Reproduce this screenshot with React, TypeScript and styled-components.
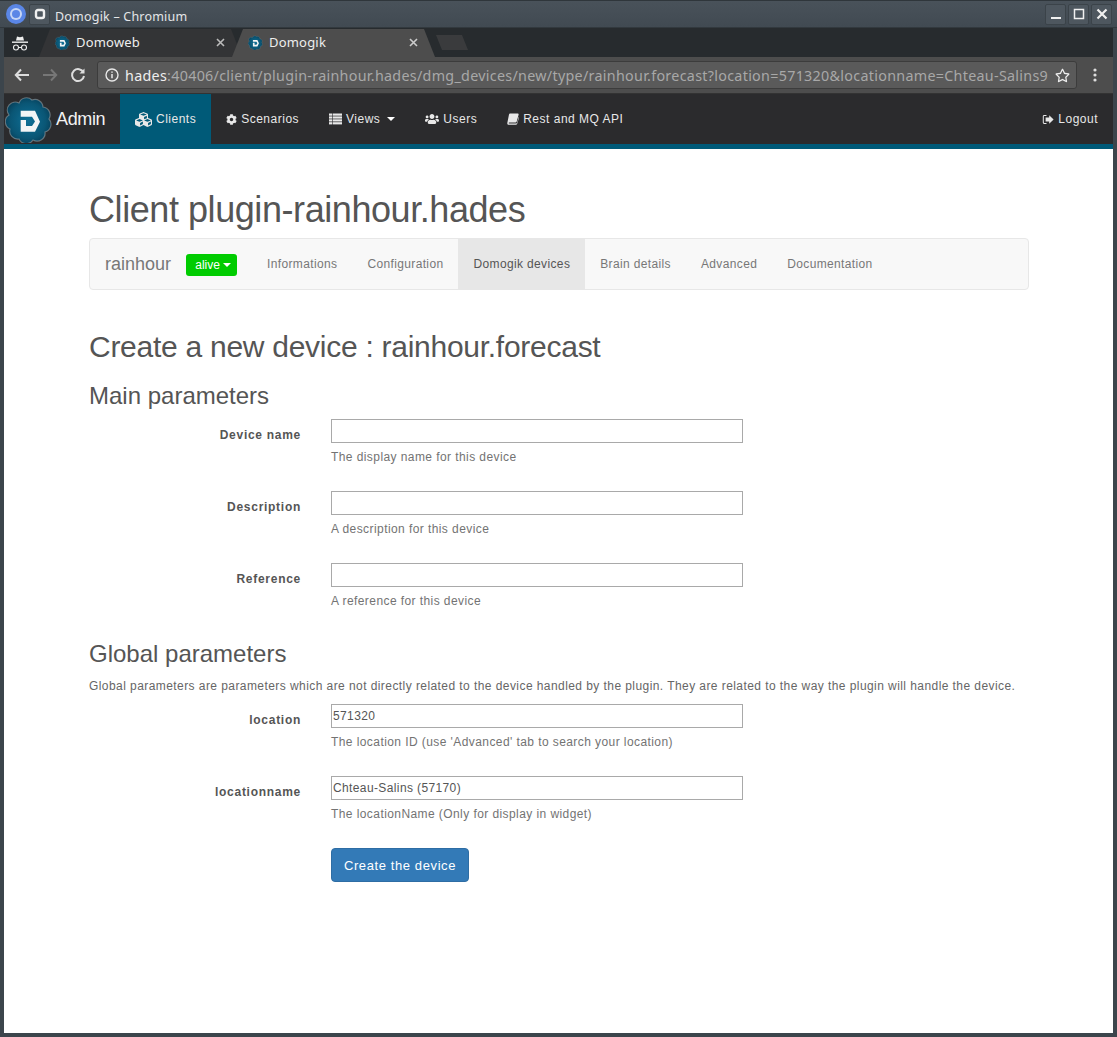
import React from "react";
import styled, { createGlobalStyle } from "styled-components";
import { FaCubes, FaCog, FaUsers, FaRegStar } from "react-icons/fa";

const Global = createGlobalStyle`
  html, body { margin: 0; padding: 0; background: #3a4248; }
  * { box-sizing: border-box; }
`;

const Frame = styled.div`
  width: 1117px;
  height: 1037px;
  display: flex;
  flex-direction: column;
  background: #3c454c;
  padding-bottom: 4px;
  overflow: hidden;
  font-family: "Liberation Sans", Arial, sans-serif;
`;
const TitleBar = styled.div`
  height: 28px;
  flex: none;
  display: flex;
  align-items: center;
  padding: 0 5px 0 6px;
  background: linear-gradient(#49525a, #414a52);
  border-top: 1px solid #2f363b;
  border-bottom: 1px solid #32393e;
  color: #e4e6e8;
  font: 12.5px "Noto Sans", sans-serif;
`;
const AppBadge = styled.span`
  width: 20px;
  height: 20px;
  flex: none;
  display: flex;
`;
const MenuBtn = styled.span`
  width: 21px;
  height: 21px;
  margin: 0 5px 0 3px;
  flex: none;
  display: flex;
  align-items: center;
  justify-content: center;
  background: #4e575f;
  border: 1px solid #3b4349;
  border-radius: 2px;
`;
const TitleText = styled.span`
  flex: 1;
  padding-top: 5px;
  letter-spacing: 0.2px;
`;
const WinBtn = styled.span`
  width: 21px;
  height: 21px;
  margin-left: 2px;
  display: flex;
  align-items: center;
  justify-content: center;
  background: #4e575f;
  border: 1px solid #3b4349;
  border-radius: 2px;
`;
const Inner = styled.div`
  flex: 1;
  min-height: 0;
  margin: 0 4px;
  display: flex;
  flex-direction: column;
`;
const TabBar = styled.div`
  height: 29px;
  flex: none;
  display: flex;
  background: #272b2e;
  align-items: flex-end;
`;
const Incognito = styled.span`
  width: 35px;
  height: 29px;
  flex: none;
  display: flex;
  align-items: center;
  justify-content: center;
  padding-right: 3px;
`;
const Tab = styled.div<{ $active?: boolean }>`
  width: 203px;
  height: 28px;
  margin-right: -10px;
  flex: none;
  display: flex;
  align-items: center;
  padding: 0 17px 2px 16px;
  background: ${(p) => (p.$active ? "#4d4d4d" : "#333436")};
  clip-path: polygon(0 100%, 11px 0, calc(100% - 11px) 0, 100% 100%);
  color: #eeeeee;
  font: 13px "Noto Sans", sans-serif;
  letter-spacing: 0.2px;
  position: relative;
  z-index: ${(p) => (p.$active ? 2 : 1)};
`;
const TabTitle = styled.span`
  flex: 1;
  margin-left: 6px;
`;
const NewTab = styled.span`
  width: 32px;
  height: 15px;
  margin: 0 0 7px 11px;
  background: #3a3b3d;
  clip-path: polygon(0 0, calc(100% - 6px) 0, 100% 100%, 6px 100%);
`;
const Toolbar = styled.div`
  height: 37px;
  flex: none;
  display: flex;
  align-items: center;
  background: #4d4d4d;
  border-bottom: 1px solid #333;
  padding: 0 0 0 10px;
`;
const ToolBtn = styled.span`
  width: 28px;
  height: 20px;
  display: flex;
  align-items: center;
  justify-content: flex-start;
`;
const Omnibox = styled.div`
  width: 980px;
  height: 28px;
  margin-left: -1px;
  display: flex;
  align-items: center;
  gap: 6px;
  padding: 0 6px 0 7px;
  background: #5a5a5a;
  border: 1px solid #3c3c3c;
  border-radius: 3px;
  font: 14.3px "Noto Sans", sans-serif;
  color: #a8a8a8;
`;
const Url = styled.span`
  flex: 1;
  min-width: 0;
  white-space: nowrap;
  letter-spacing: 0.3px;
  b { font-weight: 400; color: #eeeeee; }
`;
const Dots = styled.span`
  margin-left: 16px;
  display: flex;
`;
const Navbar = styled.nav`
  height: 55px;
  flex: none;
  display: flex;
  background: #2b2b2d;
  border-bottom: 5px solid #005a78;
  color: #e8e8e8;
  font-size: 12px;
  letter-spacing: 0.5px;
`;
const Brand = styled.div`
  width: 116px;
  display: flex;
  align-items: center;
  padding-left: 1px;
  font-size: 18px;
  letter-spacing: -0.35px;
  color: #f2f2f2;
`;
const BrandName = styled.span`
  margin-left: 3px;
`;
const NavItem = styled.a<{ $active?: boolean; $right?: boolean }>`
  display: flex;
  align-items: center;
  gap: 4px;
  padding: 0 15px;
  color: #e8e8e8;
  background: ${(p) => (p.$active ? "#005a78" : "transparent")};
  margin-left: ${(p) => (p.$right ? "auto" : "0")};
`;
const Caret = styled.span<{ $gap?: number }>`
  display: inline-block;
  width: 0;
  height: 0;
  margin-left: ${(p) => p.$gap ?? 2}px;
  border-top: 4px solid #fff;
  border-left: 4px solid transparent;
  border-right: 4px solid transparent;
`;
const Page = styled.main`
  flex: 1;
  background: #fff;
  padding: 0 84px 0 85px;
  color: #555;
  font-size: 12px;
  letter-spacing: 0.42px;
`;
const H1 = styled.h1`
  margin: 40px 0 7px;
  font-size: 36px;
  font-weight: 400;
  line-height: 42px;
  letter-spacing: -0.43px;
`;
const SubNav = styled.div`
  height: 52px;
  display: flex;
  align-items: stretch;
  background: #f8f8f8;
  border: 1px solid #e7e7e7;
  border-radius: 4px;
  letter-spacing: 0.36px;
`;
const SubBrand = styled.span`
  align-self: center;
  margin-left: 15px;
  font-size: 18px;
  letter-spacing: 0;
  color: #777;
`;
const StatusBtn = styled.span`
  align-self: center;
  margin: 2px 15px 0;
  width: 51px;
  height: 22px;
  display: flex;
  align-items: center;
  justify-content: center;
  gap: 1px;
  padding-left: 3px;
  border-radius: 3px;
  background: #00cc00;
  color: #fff;
  letter-spacing: 0;
`;
const SubItem = styled.a<{ $active?: boolean }>`
  display: flex;
  align-items: center;
  padding: 0 15px;
  color: ${(p) => (p.$active ? "#555" : "#777")};
  background: ${(p) => (p.$active ? "#e7e7e7" : "transparent")};
`;
const H2 = styled.h2`
  margin: 39px 0 0;
  font-size: 30px;
  font-weight: 400;
  line-height: 36px;
  letter-spacing: -0.27px;
`;
const H3 = styled.h3<{ $top: number; $bottom: number }>`
  margin: ${(p) => p.$top}px 0 ${(p) => p.$bottom}px;
  font-size: 24px;
  font-weight: 400;
  line-height: 26px;
  letter-spacing: 0;
`;
const Row = styled.div`
  display: grid;
  grid-template-columns: 212px 412px;
  column-gap: 30px;
  height: 72px;
`;
const Label = styled.label`
  padding-top: 9px;
  font-weight: 700;
  text-align: right;
  letter-spacing: 0.72px;
`;
const Field = styled.input`
  display: block;
  width: 412px;
  height: 24px;
  margin: 0;
  padding: 1px;
  border: 1px solid #a9a9a9;
  background: #fff;
  color: #555;
  font: 12px "Liberation Sans", sans-serif;
  letter-spacing: 0.38px;
  outline: none;
`;
const Help = styled.div`
  margin-top: 7px;
  color: #737373;
  line-height: 15px;
`;
const Intro = styled.p`
  margin: 0 0 9px;
  line-height: 17px;
  color: #666;
  white-space: nowrap;
  letter-spacing: 0.43px;
`;
const Submit = styled.button`
  display: block;
  margin-left: 242px;
  width: 138px;
  height: 34px;
  border: 1px solid #2e6da4;
  border-radius: 4px;
  background: #337ab7;
  color: #fff;
  font: 13px "Liberation Sans", sans-serif;
  letter-spacing: 0.6px;
`;

const Logo = ({ size }: { size: number }) => (
  <svg width={size} height={size} viewBox="0 0 48 48">
    <defs>
      <radialGradient id="lg" cx="50%" cy="50%" r="55%">
        <stop offset="0" stopColor="#0e6f96" />
        <stop offset="0.7" stopColor="#0a5675" />
        <stop offset="1" stopColor="#063e58" />
      </radialGradient>
    </defs>
    <path
      d="M14 8A8 8 0 0 1 27 5A8 8 0 0 1 38 12A8 8 0 0 1 44 24A8 8 0 0 1 40 37A8 8 0 0 1 28 45A8 8 0 0 1 14 44A8 8 0 0 1 5 34A8 8 0 0 1 4 20A8 8 0 0 1 14 8Z"
      fill="url(#lg)"
      stroke="#9aa6ac"
      strokeOpacity="0.55"
      strokeWidth="1.2"
    />
    <path
      d="M15.7 15.7H30L35 26.7 30 36.7H15.7V25H21V31H27L30 26.5 27 21.7H15.7Z"
      fill="#f2f4f5"
    />
  </svg>
);

const ListIcon = () => (
  <svg width="13" height="12" viewBox="0 0 13 12" fill="#e8e8e8">
    <rect x="0" y="0.5" width="3" height="2.2" />
    <rect x="3.6" y="0.5" width="9.4" height="2.2" />
    <rect x="0" y="3.4" width="3" height="2.2" />
    <rect x="3.6" y="3.4" width="9.4" height="2.2" />
    <rect x="0" y="6.3" width="3" height="2.2" />
    <rect x="3.6" y="6.3" width="9.4" height="2.2" />
    <rect x="0" y="9.2" width="3" height="2.2" />
    <rect x="3.6" y="9.2" width="9.4" height="2.2" />
  </svg>
);

const BookIcon = () => (
  <svg width="12" height="12" viewBox="0 0 12 12" fill="#e8e8e8">
    <path d="M3 .6h7.8c.7 0 1 .5.8 1.2L9.7 8.6c-.2.6-.5.9-1.2.9H2.2c-.6 0-.8.7-.2.9h7.2c.4 0 .7-.2.8-.5l1.8-6.2c.3.3.3.7.2 1.1l-1.8 6c-.2.6-.7 1-1.3 1H1.8c-.9 0-1.6-.8-1.5-1.8L2 1.6C2.2 1 2.5.6 3 .6z" />
  </svg>
);

const LogoutIcon = () => (
  <svg width="12" height="11" viewBox="0 0 12 11" fill="#e8e8e8">
    <path d="M4.5 1H2.2C1.400 1 .8 1.600.8 2.400v6.200c0 .8.600 1.400 1.400 1.400h2.300V9H2.200c-.2 0-.4-.2-.4-.4V2.400c0-.2.200-.4.400-.4h2.300z" />
    <path d="M7.200 1.200L11.600 5.500 7.200 9.800V7.400H3.600V3.600h3.600z" />
  </svg>
);

const FormRow = ({ label, help, value }: { label: string; help: string; value?: string }) => (
  <Row>
    <Label>{label}</Label>
    <div>
      <Field defaultValue={value} readOnly />
      <Help>{help}</Help>
    </div>
  </Row>
);

export default function App() {
  return (
    <Frame>
      <Global />
      <TitleBar>
        <AppBadge>
          <svg width="20" height="20" viewBox="0 0 20 20">
            <circle cx="10" cy="10" r="10" fill="#5a86e6" />
            <circle cx="10" cy="10" r="6" fill="#c6d6f6" />
            <circle cx="10" cy="10" r="4" fill="#5a86e6" />
          </svg>
        </AppBadge>
        <MenuBtn>
          <svg width="12" height="12" viewBox="0 0 12 12">
            <rect x="2" y="2" width="8" height="8" rx="2" fill="none" stroke="#f0f0f0" strokeWidth="2.4" />
          </svg>
        </MenuBtn>
        <TitleText>Domogik – Chromium</TitleText>
        <WinBtn>
          <svg width="12" height="12" viewBox="0 0 12 12">
            <rect x="1" y="9" width="10" height="2" fill="#f0f0f0" />
          </svg>
        </WinBtn>
        <WinBtn>
          <svg width="12" height="12" viewBox="0 0 12 12">
            <rect x="1.500" y="1.500" width="9" height="9" fill="none" stroke="#f0f0f0" strokeWidth="1.5" />
          </svg>
        </WinBtn>
        <WinBtn>
          <svg width="12" height="12" viewBox="0 0 12 12">
            <path d="M1.500 1.500l9 9M10.500 1.500l-9 9" stroke="#f0f0f0" strokeWidth="2.2" />
          </svg>
        </WinBtn>
      </TitleBar>
      <Inner>
        <TabBar>
          <Incognito>
            <svg width="18" height="20" viewBox="0 0 18 20" fill="none">
              <path d="M5 7.500L6 3.500 9 4.200 12 3.500 13 7.500z" fill="#eee" />
              <rect x="1" y="8.500" width="16" height="1.400" fill="#eee" />
              <circle cx="5" cy="14.500" r="2.500" stroke="#eee" strokeWidth="1.100" />
              <circle cx="13" cy="14.500" r="2.500" stroke="#eee" strokeWidth="1.100" />
              <path d="M7.500 14.500h3" stroke="#eee" />
            </svg>
          </Incognito>
          <Tab>
            <Logo size={15} />
            <TabTitle>Domoweb</TabTitle>
            <svg width="9" height="9" viewBox="0 0 9 9">
              <path d="M1 1l7 7M8 1L1 8" stroke="#bbb" strokeWidth="1.600" />
            </svg>
          </Tab>
          <Tab $active>
            <Logo size={15} />
            <TabTitle>Domogik</TabTitle>
            <svg width="9" height="9" viewBox="0 0 9 9">
              <path d="M1 1l7 7M8 1L1 8" stroke="#ccc" strokeWidth="1.600" />
            </svg>
          </Tab>
          <NewTab />
        </TabBar>
        <Toolbar>
          <ToolBtn>
            <svg width="16" height="14" viewBox="0 0 16 14" fill="none">
              <path d="M15 7H2M7 1.500L1.800 7 7 12.500" stroke="#ddd" strokeWidth="2" />
            </svg>
          </ToolBtn>
          <ToolBtn>
            <svg width="16" height="14" viewBox="0 0 16 14" fill="none">
              <path d="M1 7h13M9 1.500L14.200 7 9 12.500" stroke="#777" strokeWidth="2" />
            </svg>
          </ToolBtn>
          <ToolBtn>
            <svg width="16" height="16" viewBox="0 0 16 16" fill="none">
              <path d="M13.500 5.500A6 6 0 1 0 14 9" stroke="#ddd" strokeWidth="2" />
              <path d="M14.500 1.500v5h-5z" fill="#ddd" />
            </svg>
          </ToolBtn>
          <Omnibox>
            <svg width="14" height="14" viewBox="0 0 14 14" fill="none">
              <circle cx="7" cy="7" r="6" stroke="#e8e8e8" strokeWidth="1.400" />
              <path d="M7 6v4.200M7 3.400v1.400" stroke="#e8e8e8" strokeWidth="1.500" />
            </svg>
            <Url>
              <b>hades</b>:40406/client/plugin-rainhour.hades/dmg_devices/new/type/rainhour.forecast?location=571320&amp;locationname=Chteau-Salins9
            </Url>
            <FaRegStar size={15} color="#eee" />
          </Omnibox>
          <Dots>
            <svg width="4" height="14" viewBox="0 0 4 14">
              <circle cx="2" cy="2" r="1.600" fill="#ddd" />
              <circle cx="2" cy="7" r="1.600" fill="#ddd" />
              <circle cx="2" cy="12" r="1.600" fill="#ddd" />
            </svg>
          </Dots>
        </Toolbar>
        <Navbar>
          <Brand>
            <Logo size={48} />
            <BrandName>Admin</BrandName>
          </Brand>
          <NavItem $active><FaCubes size={17} /> Clients</NavItem>
          <NavItem><FaCog size={11} /> Scenarios</NavItem>
          <NavItem><ListIcon /> Views <Caret $gap={3} /></NavItem>
          <NavItem><FaUsers size={14} /> Users</NavItem>
          <NavItem><BookIcon /> Rest and MQ API</NavItem>
          <NavItem $right><LogoutIcon /> Logout</NavItem>
        </Navbar>
        <Page>
          <H1>Client plugin-rainhour.hades</H1>
          <SubNav>
            <SubBrand>rainhour</SubBrand>
            <StatusBtn>alive <Caret /></StatusBtn>
            <SubItem>Informations</SubItem>
            <SubItem>Configuration</SubItem>
            <SubItem $active>Domogik devices</SubItem>
            <SubItem>Brain details</SubItem>
            <SubItem>Advanced</SubItem>
            <SubItem>Documentation</SubItem>
          </SubNav>
          <H2>Create a new device : rainhour.forecast</H2>
          <H3 $top={18} $bottom={10}>Main parameters</H3>
          <FormRow label="Device name" help="The display name for this device" />
          <FormRow label="Description" help="A description for this device" />
          <FormRow label="Reference" help="A reference for this device" />
          <H3 $top={6} $bottom={11}>Global parameters</H3>
          <Intro>Global parameters are parameters which are not directly related to the device handled by the plugin. They are related to the way the plugin will handle the device.</Intro>
          <FormRow label="location" help="The location ID (use 'Advanced' tab to search your location)" value="571320" />
          <FormRow label="locationname" help="The locationName (Only for display in widget)" value="Chteau-Salins (57170)" />
          <Submit>Create the device</Submit>
        </Page>
      </Inner>
    </Frame>
  );
}
